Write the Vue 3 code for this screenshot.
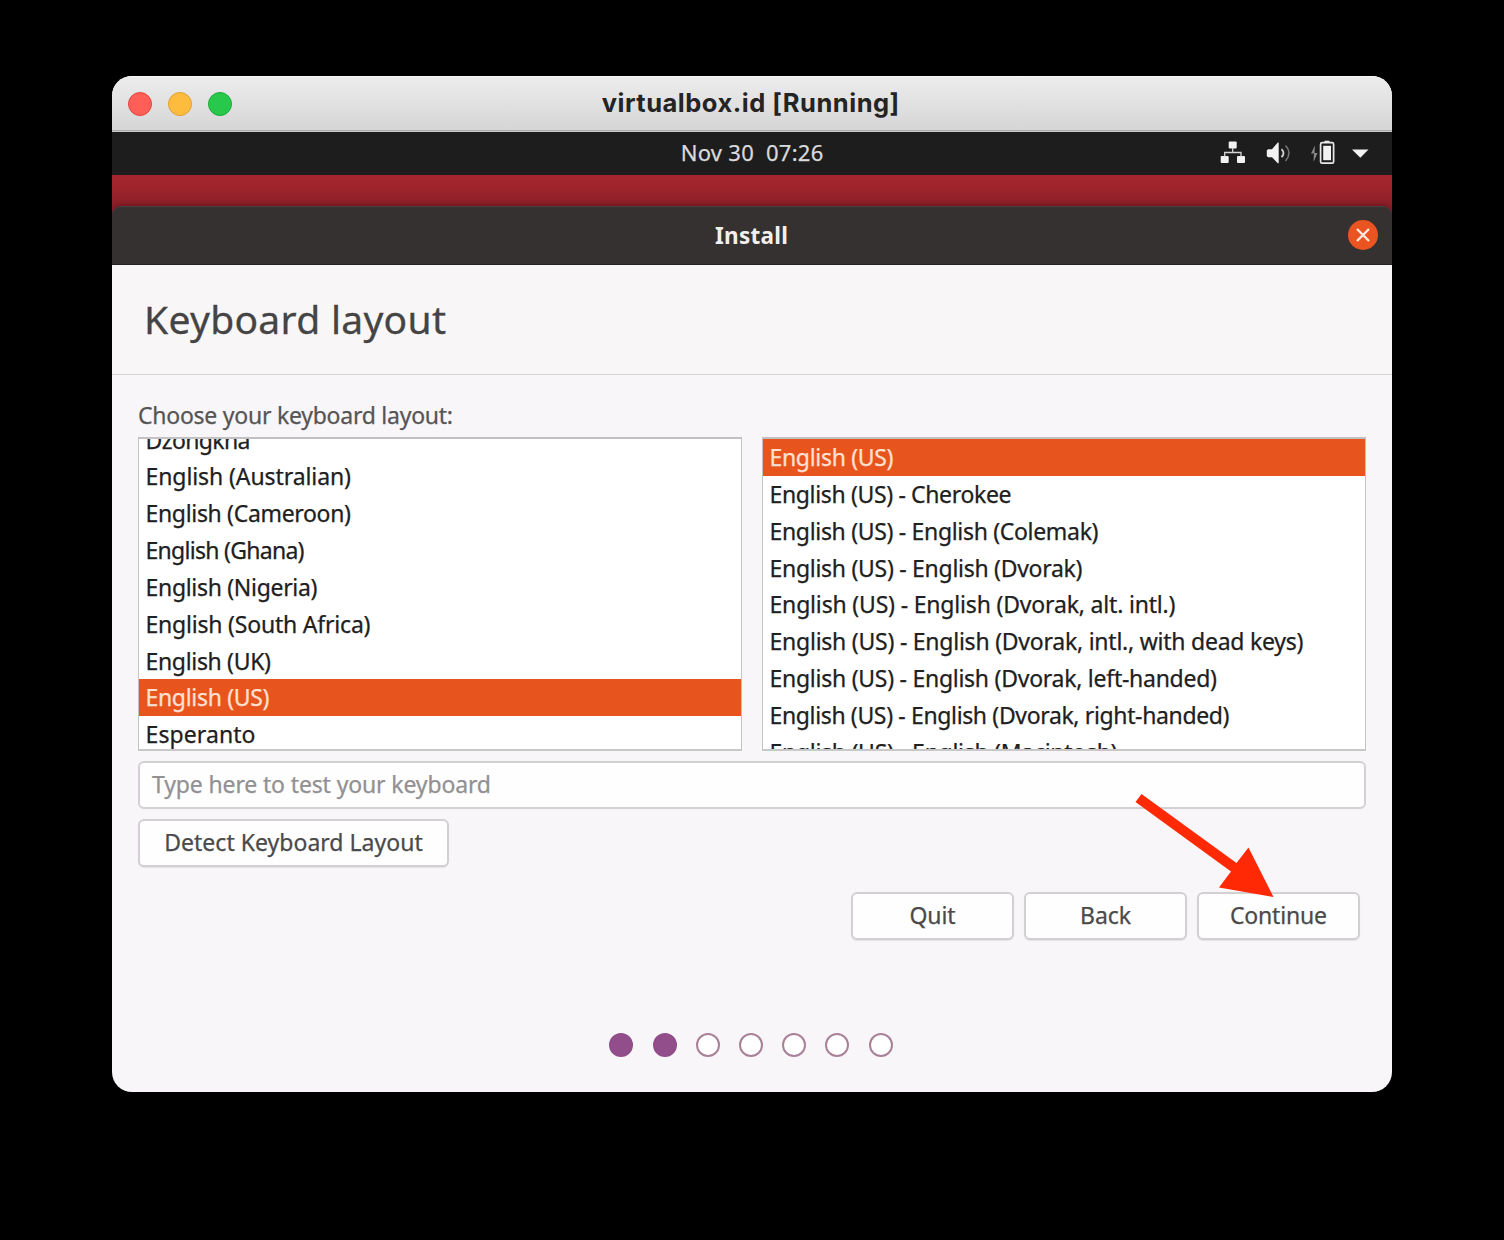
<script setup>
const layouts = [
  { name: 'Dzongkha', w: 105 },
  { name: 'English (Australian)', w: 205.5 },
  { name: 'English (Cameroon)', w: 205.5 },
  { name: 'English (Ghana)', w: 159 },
  { name: 'English (Nigeria)', w: 172 },
  { name: 'English (South Africa)', w: 225 },
  { name: 'English (UK)', w: 125.5 },
  { name: 'English (US)', w: 124, selected: true },
  { name: 'Esperanto', w: 110 },
]

const variants = [
  { name: 'English (US)', w: 124, selected: true },
  { name: 'English (US) - Cherokee', w: 242 },
  { name: 'English (US) - English (Colemak)', w: 329 },
  { name: 'English (US) - English (Dvorak)', w: 313 },
  { name: 'English (US) - English (Dvorak, alt. intl.)', w: 406 },
  { name: 'English (US) - English (Dvorak, intl., with dead keys)', w: 534 },
  { name: 'English (US) - English (Dvorak, left-handed)', w: 447.5 },
  { name: 'English (US) - English (Dvorak, right-handed)', w: 460 },
  { name: 'English (US) - English (Macintosh)', w: 348 },
]

const steps = [true, true, false, false, false, false, false]

// Tracks a single line of text so that it spans the given width.
const vFit = {
  mounted(el, { value }) {
    const natural = el.getBoundingClientRect().width
    const spacing = (value - natural) / (el.textContent.length - 1)
    el.style.letterSpacing = `${spacing}px`
    el.style.marginRight = `${-spacing}px`
  },
}
</script>

<template>
  <main class="desktop">
    <section class="window">
      <header class="titlebar">
        <div class="lights">
          <i class="light close"></i>
          <i class="light minimize"></i>
          <i class="light zoom"></i>
        </div>
        <span v-fit="297" class="t title">virtualbox.id [Running]</span>
      </header>

      <div class="topbar">
        <span v-fit="142.5" class="t clock">Nov 30&nbsp; 07:26</span>
        <svg class="tray" width="160" height="43" viewBox="0 0 160 43">
          <g fill="#f2f2f2">
            <rect x="16.700" y="9.500" width="8" height="7" rx="1" />
            <rect x="8.700" y="24" width="8" height="7" rx="1" />
            <rect x="25" y="24" width="8" height="7" rx="1" />
            <path d="M56 17.200h4l5.800-6.600h.9v20.600h-.9L60 25.200h-4l-1.200-1.200v-5.500z" />
            <path d="M112.500 11V8.700h5V11z" />
            <rect x="111.200" y="13.800" width="7.800" height="14.400" />
            <path d="M140 17.500h16.500l-8.200 8.200z" />
          </g>
          <path d="M20.700 16v4.500M12.700 25v-4.500H29V25" fill="none" stroke="#d5d5d5" stroke-width="1.300" />
          <path d="M69.500 17.200q4 4 0 8" fill="none" stroke="#d0d0d0" stroke-width="1.800" />
          <path d="M73.500 13.500q7 7.500 0 15.500" fill="none" stroke="#777" stroke-width="1.500" />
          <rect x="108.600" y="10.700" width="13" height="20.500" rx="1.500" fill="none" stroke="#e8e8e8" stroke-width="1.700" />
          <path d="M103 13.500l-4 8h3l-.5 8.500 4-9h-3z" fill="#8a8a8a" />
        </svg>
      </div>

      <div class="wallpaper">
        <div class="headerbar">
          <span v-fit="73" class="t install">Install</span>
          <div class="dismiss">
            <svg width="30" height="30" viewBox="0 0 30 30">
              <path d="M9 9l12 12M21 9L9 21" stroke="#ffe9df" stroke-width="2.400" />
            </svg>
          </div>
        </div>
      </div>

      <div class="heading"><span v-fit="302" class="t">Keyboard layout</span></div>

      <div class="content">
        <div class="label"><span v-fit="315" class="t">Choose your keyboard layout:</span></div>
        <div class="lists">
          <ul class="list scrolled">
            <li v-for="l in layouts" :key="l.name" :class="{ selected: l.selected }">
              <span v-fit="l.w" class="t">{{ l.name }}</span>
            </li>
          </ul>
          <ul class="list">
            <li v-for="v in variants" :key="v.name" :class="{ selected: v.selected }">
              <span v-fit="v.w" class="t">{{ v.name }}</span>
            </li>
          </ul>
        </div>
        <div class="entry"><span v-fit="339" class="t">Type here to test your keyboard</span></div>
        <div class="button detect"><span v-fit="258.500" class="t">Detect Keyboard Layout</span></div>
        <div class="actions">
          <div class="button"><span v-fit="46" class="t">Quit</span></div>
          <div class="button"><span v-fit="51" class="t">Back</span></div>
          <div class="button"><span v-fit="97" class="t">Continue</span></div>
        </div>
        <div class="steps">
          <i v-for="(done, i) in steps" :key="i" class="step" :class="{ done }"></i>
        </div>
      </div>
    </section>

    <svg class="arrow" width="150" height="120" viewBox="0 0 150 120">
      <path d="M11.500 14L106.500 83l12-15.500L143.500 117 89 107.500l12-16L5.500 22z" fill="#ff2a05" />
    </svg>
  </main>
</template>

<style>
body {
  margin: 0;
  background: #000;
}
</style>

<style scoped>
.desktop {
  position: relative;
  box-sizing: border-box;
  width: 1504px;
  height: 1240px;
  padding: 76px 112px 0;
  background: #000;
  font: 23px/36px "Noto Sans", "Open Sans", sans-serif;
  color: #4a4a4a;
  overflow: hidden;
}
.t {
  display: inline-block;
  white-space: pre;
  flex: none;
  -webkit-text-stroke: 0.250px currentColor;
}
.window {
  width: 1280px;
  height: 1016px;
  border-radius: 20px;
  overflow: hidden;
  background: #f8f6f9;
  display: flex;
  flex-direction: column;
}
.titlebar {
  box-sizing: border-box;
  height: 56px;
  flex: none;
  display: grid;
  grid-template-columns: 1fr auto 1fr;
  align-items: center;
  padding: 0 19px 2px 16px;
  background: linear-gradient(#ededed, #d5d5d5);
  border-bottom: 1px solid #c6c6c6;
  box-shadow: inset 0 1px #f8f8f8, inset 0 -1px #acacac;
}
.lights {
  display: flex;
  gap: 16px;
  padding-top: 2px;
}
.light {
  box-sizing: border-box;
  width: 24px;
  height: 24px;
  border-radius: 50%;
  border: 1px solid;
}
.close { background: #ff5f57; border-color: #e2463f; }
.minimize { background: #febc3f; border-color: #dfa033; }
.zoom { background: #27c84b; border-color: #1dab38; }
.title {
  font: 700 25.500px/30px Inter, sans-serif;
  color: #242424;
  -webkit-text-stroke: 0;
}
.topbar {
  position: relative;
  height: 43px;
  flex: none;
  display: flex;
  justify-content: center;
  align-items: center;
  background: #1d1d1e;
  color: #dadada;
}
.clock {
  font-size: 22px;
  padding-bottom: 4px;
}
.tray {
  position: absolute;
  right: 20px;
  top: 0;
}
.wallpaper {
  flex: none;
  padding-top: 31px;
  background: linear-gradient(#a6262f 0, #9c242c 16px, #8a1f29 31px, #8a1f39 40px);
}
.headerbar {
  box-sizing: border-box;
  height: 59px;
  display: grid;
  grid-template-columns: 1fr auto 1fr;
  align-items: center;
  background: #353130;
  border-top: 1px solid #4e4241;
  border-bottom: 1px solid #242222;
  border-radius: 9px 9px 0 0;
  box-shadow: 0 -1px 4px rgba(70, 10, 20, 0.5);
}
.install {
  grid-column: 2;
  font-weight: 700;
  font-size: 22.500px;
  margin-left: -1px;
  color: #f2efed;
  -webkit-text-stroke: 0;
}
.dismiss {
  justify-self: end;
  width: 30px;
  height: 30px;
  margin: 0 14px 2px 0;
  border-radius: 50%;
  background: #e95420;
}
.dismiss svg { display: block; }
.heading {
  box-sizing: border-box;
  height: 110px;
  flex: none;
  display: flex;
  align-items: center;
  padding: 0 0 1px 32px;
  border-bottom: 1px solid #d8d5d8;
  background: #f9f6f8;
  font-size: 39px;
  line-height: 60px;
  color: #444;
}
.heading .t { -webkit-text-stroke-width: 0.300px; }
.content {
  display: flex;
  flex-direction: column;
  padding: 21px 26px 0;
}
.label {
  height: 41px;
  line-height: 38px;
  color: #555;
}
.lists {
  display: grid;
  grid-template-columns: 1fr 1fr;
  gap: 20px;
}
.list {
  box-sizing: border-box;
  height: 314px;
  margin: 0;
  padding: 0;
  list-style: none;
  border: 1px solid #c4c2c4;
  border-top: 2px solid #c2c0c2;
  border-bottom: 2px solid #c9c8c9;
  background: #fff;
  overflow: hidden;
  color: #202020;
}
.scrolled li:first-child { margin-top: -17.500px; }
.list li {
  height: 36.850px;
  line-height: 37.300px;
  padding-left: 6.500px;
  white-space: nowrap;
}
.list li.selected {
  background: #e8541e;
  color: #ffe0d2;
}
.entry,
.button {
  box-sizing: border-box;
  height: 48px;
  border: 2px solid #d2d0d3;
  border-radius: 6px;
  background: #fefefe;
  display: flex;
  align-items: center;
}
.entry {
  margin-top: 10px;
  padding: 0 0 2px 12px;
  color: #929092;
}
.button {
  width: 163px;
  justify-content: center;
  padding-bottom: 2px;
  box-shadow: 0 1px 1px rgba(0, 0, 0, 0.08);
}
.detect {
  width: 311px;
  margin-top: 10px;
}
.actions {
  display: flex;
  justify-content: flex-end;
  gap: 10px;
  margin: 25px 6px 0 0;
}
.steps {
  display: flex;
  justify-content: center;
  gap: 19.200px;
  margin: 93px 2px 0 0;
}
.step {
  box-sizing: border-box;
  width: 24px;
  height: 24px;
  border: 2px solid #a98199;
  border-radius: 50%;
  background: #fff;
}
.step.done {
  background: #924d8b;
  border-color: #924d8b;
}
.arrow {
  position: absolute;
  left: 1130px;
  top: 780px;
}
</style>
